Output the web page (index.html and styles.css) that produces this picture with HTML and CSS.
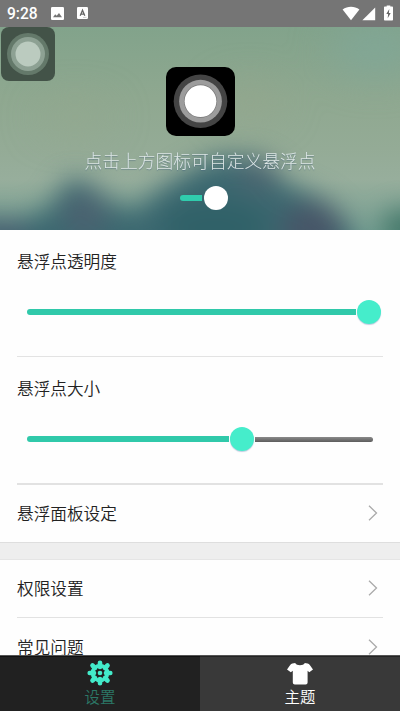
FILE: index.html
```html
<!DOCTYPE html>
<html lang="zh-CN">
<head>
<meta charset="utf-8">
<title>悬浮点</title>
<link rel="stylesheet" href="styles.css">
</head>
<body>
<div class="app">
  <header class="status">
    <span class="clock">9:28</span>
    <svg class="st-img" width="13" height="13" viewBox="0 0 13 13"><rect width="13" height="13" rx="1.3" fill="#fff"/><path d="M2 10.2 4.2 7.2 5.7 8.8 8 6 11 10.2Z" fill="#757575"/></svg>
    <svg class="st-a" width="11" height="12" viewBox="0 0 11 12"><rect width="11" height="12" rx="1.2" fill="#fff"/><path d="M3.2 8.8 5.5 3.3 7.8 8.8M4 7.1H7" fill="none" stroke="#666" stroke-width="1.3"/><path d="M6 10.4H9.5" stroke="#bbb" stroke-width=".7"/></svg>
    <span class="spacer"></span>
    <svg class="st-wifi" width="18" height="15" viewBox="0 0 18 15"><path d="M.6 3.4C5.5-.3 12.5-.3 17.4 3.4L9 14.2Z" fill="#fff"/></svg>
    <svg class="st-sig" width="14" height="14" viewBox="0 0 14 14"><path d="M13.2.5V13.3H.4Z" fill="#fff"/></svg>
    <svg class="st-bat" width="9" height="16" viewBox="0 0 9 16"><path d="M2.7 1.5V.4H6.3V1.5H8.2Q9 1.5 9 2.3V14.7Q9 15.5 8.2 15.5H.8Q0 15.5 0 14.7V2.3Q0 1.5.8 1.5Z" fill="#fff"/><path d="M5.3 4 2.3 9H4.1L3.7 13.3 6.7 7.9H4.9Z" fill="#666"/></svg>
  </header>

  <section class="hero">
    <svg class="scene" width="400" height="203" viewBox="0 0 400 203" preserveAspectRatio="none">
      <defs>
        <linearGradient id="sky" x1="0" y1="0" x2="0" y2="1">
          <stop offset="0" stop-color="#82a38b"/><stop offset=".35" stop-color="#8fa890"/><stop offset=".6" stop-color="#94ab96"/><stop offset=".75" stop-color="#97ae9c"/><stop offset="1" stop-color="#78a093"/>
        </linearGradient>
        <filter id="soft" x="-50%" y="-50%" width="200%" height="200%" color-interpolation-filters="sRGB"><feGaussianBlur stdDeviation="13"/></filter>
        <filter id="haze" x="-50%" y="-50%" width="200%" height="200%" color-interpolation-filters="sRGB"><feGaussianBlur stdDeviation="20"/></filter>
      </defs>
      <rect width="400" height="203" fill="url(#sky)"/>
      <g filter="url(#haze)">
        <ellipse cx="375" cy="22" rx="45" ry="24" fill="#7fa79a" opacity=".8"/>
        <ellipse cx="250" cy="75" rx="30" ry="14" fill="#96a58b" opacity=".8"/>
        <ellipse cx="75" cy="90" rx="35" ry="12" fill="#94a78c" opacity=".7"/>
      </g>
      <g filter="url(#soft)">
        <path d="M-30 190 25 192 50 180 68 152 88 155 108 174 135 184 155 166 185 146 215 130 260 130 285 156 325 174 350 200 360 240-30 240Z" fill="#3c6870"/>
        <ellipse cx="4" cy="208" rx="25" ry="14" fill="#495d70"/>
        <ellipse cx="85" cy="188" rx="22" ry="25" fill="#4a6270"/>
        <ellipse cx="312" cy="201" rx="31" ry="26" fill="#475668"/>
        <ellipse cx="258" cy="150" rx="22" ry="16" fill="#4b6570"/>
        <ellipse cx="215" cy="200" rx="54" ry="28" fill="#306168"/>
        <ellipse cx="408" cy="202" rx="27" ry="20" fill="#427668"/>
      </g>
    </svg>
    <button class="dot big" aria-label="悬浮点"><svg viewBox="0 0 69 69"><circle cx="34.5" cy="34.2" r="26.8" fill="#444"/><circle cx="34.5" cy="34.2" r="21.4" fill="#9c9c9c"/><circle cx="34.5" cy="34.2" r="16.6" fill="#777"/><circle cx="34.5" cy="34.2" r="15.9" fill="#fff"/></svg></button>
    <p class="hint">点击上方图标可自定义悬浮点</p>
    <div class="switch"><i></i></div>
    <div class="dot small"><svg viewBox="0 0 54 54"><circle cx="27" cy="27" r="21" fill="#64796a"/><circle cx="27" cy="27" r="17" fill="#8da193"/><circle cx="27" cy="27" r="12.5" fill="#bbcbbf"/></svg></div>
  </section>

  <main class="content">
    <section class="setting">
      <h2>悬浮点透明度</h2>
      <div class="slider full"><span class="fill"></span><span class="knob"></span></div>
    </section>
    <section class="setting second">
      <h2>悬浮点大小</h2>
      <div class="slider part"><span class="fill"></span><span class="knob"></span><span class="rest"></span></div>
    </section>
    <a class="row panel">悬浮面板设定<svg viewBox="0 0 10 16"><path d="M1 .8 8.5 8 1 15.2"/></svg></a>
    <div class="band"></div>
    <a class="row perm">权限设置<svg viewBox="0 0 10 16"><path d="M1 .8 8.5 8 1 15.2"/></svg></a>
    <a class="row faq">常见问题<svg viewBox="0 0 10 16"><path d="M1 .8 8.5 8 1 15.2"/></svg></a>
  </main>

  <nav class="tabs">
    <a class="tab active">
      <svg width="26" height="26" viewBox="-13 -13 26 26">
        <g stroke="#43ebca" stroke-width="4.6" stroke-linecap="round"><path d="M0-10.3V-6M0 10.3V6M-10.3 0H-6M10.3 0H6M-7.5-7.5-5-5M7.5 7.5 5 5M-7.5 7.5-5 5M7.5-7.5 5-5"/></g>
        <circle r="7.4" fill="none" stroke="#43ebca" stroke-width="3.8"/><circle r="2.3" fill="#43ebca"/>
      </svg>
      <span>设置</span>
    </a>
    <a class="tab">
      <svg width="26" height="26" viewBox="0 0 26 26"><path d="M8.2 3C9.5 5.9 16.5 5.9 17.8 3L20.6 3.5Q22 3.8 22.8 5L26 9.6 22.3 12.3 20.6 10.8V22.5Q20.6 24.5 18.6 24.5H7.8Q5.8 24.5 5.8 22.5V10.8L3.8 12.3 0 9.6 3.2 5Q4 3.8 5.4 3.5Z" fill="#fff"/></svg>
      <span>主题</span>
    </a>
  </nav>
</div>
</body>
</html>
```
FILE: styles.css
```css
* { box-sizing: border-box; }
body { margin: 0; background: #fff; font-family: "Noto Sans CJK SC", sans-serif; color: #222; }
.app { width: 400px; height: 711px; display: flex; flex-direction: column; overflow: hidden; }

.status { height: 27px; flex: none; background: #757575; display: flex; align-items: flex-start; padding: 0 7px; }
.clock { font: 500 15.6px/28px Roboto, sans-serif; color: #fff; width: 44px; }
.st-img { margin-top: 7px; }
.st-a { margin: 7px 0 0 13px; }
.spacer { flex: 1; }
.st-wifi { margin-top: 6px; }
.st-sig { margin: 7px 0 0 2px; }
.st-bat { margin: 5px 0 0 8px; }

.hero { height: 203px; flex: none; position: relative; isolation: isolate; overflow: hidden; display: flex; flex-direction: column; align-items: center; padding-top: 39.5px; }
.scene { position: absolute; inset: 0; z-index: -1; }
.dot svg { display: block; width: 100%; height: 100%; }
.big { border: 0; padding: 0; width: 69px; height: 69px; border-radius: 10px; background: #000; flex: none; }
.small { position: absolute; left: 1px; top: 0; width: 54px; height: 54px; border-radius: 8px; background: #435348; }
.hint { margin: 10.5px 0 0; font-size: 17.8px; line-height: 28px; font-weight: 300; color: #dde6e6; text-shadow: 0 1px 1px rgba(60, 90, 120, .45); white-space: nowrap; }
.switch { width: 48px; height: 24px; margin: 12px 0 0 8px; display: flex; align-items: center; justify-content: space-between; }
.switch::before { content: ""; width: 22px; height: 6px; border-radius: 3px 0 0 3px; background: #30ccad; }
.switch i { width: 24px; height: 24px; border-radius: 50%; background: #fff; }

.content { flex: 1; min-height: 0; overflow: hidden; background: #fefefe; }
.setting { height: 127px; margin: 0 17px; border-bottom: 1px solid #e3e3e3; }
.setting.second { border-bottom: 2px solid #e2e2e2; height: 128px; }
h2 { margin: 0; padding-top: 17px; font-size: 16.65px; line-height: 28px; font-weight: 350; }
.slider { display: flex; align-items: center; height: 26px; margin: 24px 0 0 10px; }
.fill { height: 6px; border-radius: 3px 0 0 3px; background: #30c9aa; }
.full .fill { width: 329px; }
.part .fill { width: 202px; }
.knob { width: 24px; height: 24px; border-radius: 50%; background: #45edcb; margin: 0 1px; flex: none; box-shadow: 0 1px 1px rgba(80, 110, 170, .35); }
.rest { width: 118px; height: 5px; border-radius: 0 3px 3px 0; background: linear-gradient(#8b8b8b, #5c5c5c); }
.row { display: flex; align-items: center; justify-content: space-between; font-size: 16.65px; font-weight: 350; line-height: 28px; margin: 0 17px; }
.row svg { width: 10px; height: 16px; margin-right: 5px; fill: none; stroke: #aaa; stroke-width: 1.3; }
.panel { height: 57px; padding-bottom: 2px; }
.band { height: 18px; background: #eee; border-top: 1px solid #dedede; border-bottom: 1px solid #e5e5e5; }
.perm { height: 58px; padding-bottom: 1px; border-bottom: 1px solid #e2e2e2; }
.faq { height: 58px; padding-bottom: 1px; }

.tabs { height: 56px; flex: none; display: flex; border-top: 1px solid #555; }
.tab { flex: 1; background: #393939; border-top: 1px solid #242424; display: flex; flex-direction: column; align-items: center; padding-top: 3px; color: #fff; font-size: 15.4px; line-height: 21px; font-weight: 350; }
.tab svg { display: block; flex: none; }
.active { background: #212121; color: #2c7867; border-top-color: #111; }
```
